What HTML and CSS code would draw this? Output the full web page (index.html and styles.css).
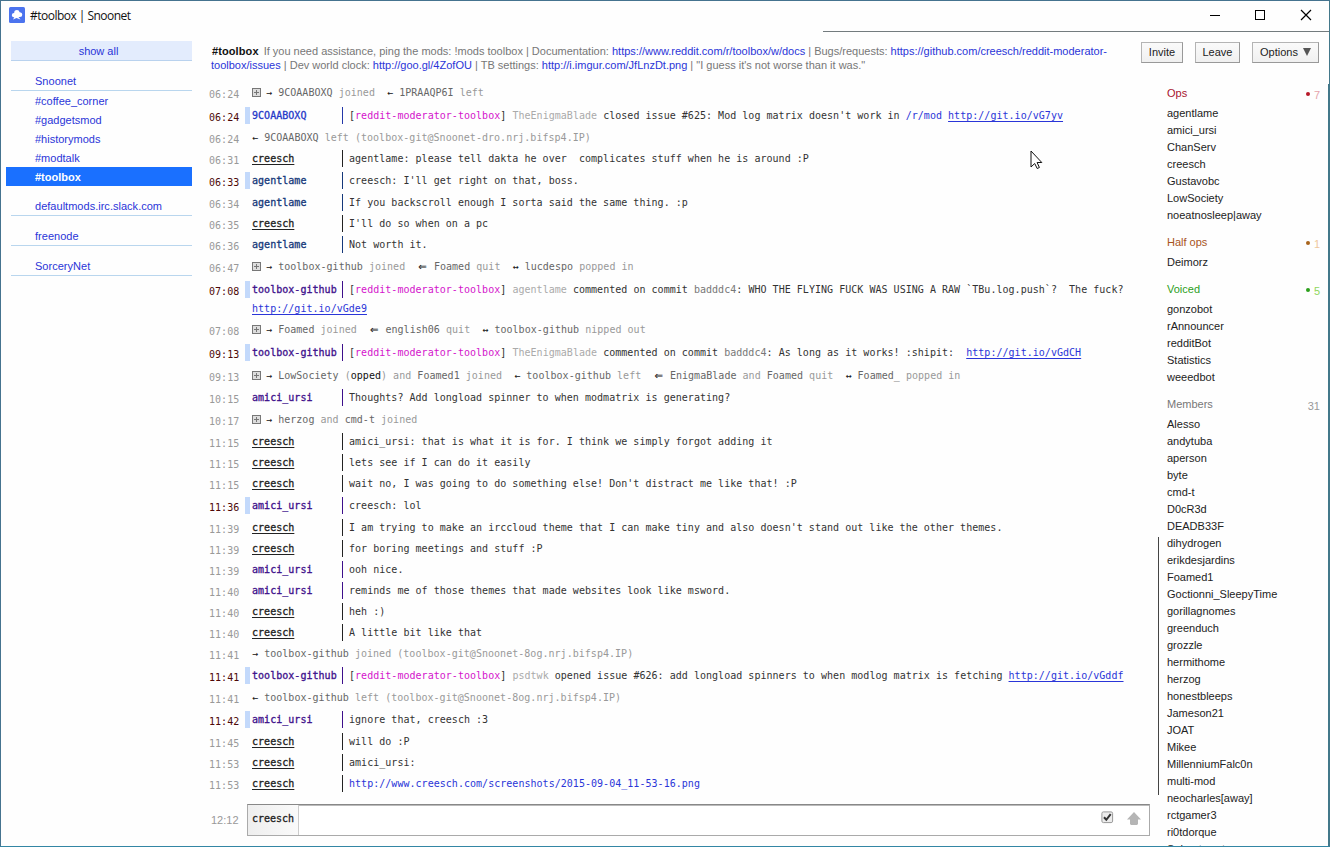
FILE: index.html
```html
<!DOCTYPE html>
<html lang="en">
<head>
<meta charset="utf-8">
<title>#toolbox | Snoonet</title>
<link rel="stylesheet" href="styles.css">
</head>
<body>
<div class="window">
  <header class="titlebar">
    <svg class="logo" width="16" height="16" viewBox="0 0 16 16"><rect width="16" height="16" rx="1.5" fill="#4b73ee"/><path d="M8 3a2.700 2.700 0 0 1 2.600 2.200A2.500 2.500 0 0 1 13.300 7.700a2.300 2.300 0 0 1-2.300 2.200H9.500L11.500 12.600 7.500 11 4 12.400 5.300 10.200A2.200 2.200 0 0 1 2.800 8.200 2.300 2.300 0 0 1 5.200 6 2.800 2.800 0 0 1 8 3z" fill="#fff"/></svg>
    <span class="title">#toolbox | Snoonet</span>
    <svg class="controls" width="103" height="12" viewBox="0 0 103 12" fill="none" stroke="#000" shape-rendering="crispEdges"><path d="M0 6.500h10M45.500 1.500h9v9h-9z"/><path d="M91 1l10 10M101 1L91 11" shape-rendering="auto" stroke-width="1.200"/></svg>
  </header>
  <div class="progress"></div>
  <div class="body">
    <nav class="sidebar">
      <a class="show-all">show all</a>
      <a class="network first">Snoonet</a>
      <a class="channel">#coffee_corner</a>
      <a class="channel">#gadgetsmod</a>
      <a class="channel">#historymods</a>
      <a class="channel">#modtalk</a>
      <a class="channel active">#toolbox</a>
      <a class="network">defaultmods.irc.slack.com</a>
      <a class="network">freenode</a>
      <a class="network">SorceryNet</a>
    </nav>
    <div class="content">
      <div class="top">
        <div class="topic">
          <div class="t1"><b>#toolbox</b>If you need assistance, ping the mods: !mods toolbox | Documentation: <a>https://www.reddit.com/r/toolbox/w/docs</a> | Bugs/requests: <a>https://github.com/creesch/reddit-moderator-</a></div>
          <div class="t2"><a>toolbox/issues</a> | Dev world clock: <a>http://goo.gl/4ZofOU</a> | TB settings: <a>http://i.imgur.com/JfLnzDt.png</a> | "I guess it's not worse than it was."</div>
        </div>
        <div class="buttons"><span class="btn invite">Invite</span><span class="btn leave">Leave</span><span class="btn options">Options <i></i></span></div>
      </div>
      <div class="columns">
        <div class="chat">
          <div class="log">
            <div class="row sys h23"><time>06:24</time><div class="ev"><i class="plus"></i><u>→</u> <b>9COAABOXQ</b> joined  <u>←</u> <b>1PRAAQP6I</b> left</div></div>
            <div class="row hl h22 blue"><time>06:24</time><span class="nick">9COAABOXQ</span><p>[<em>reddit-moderator-toolbox</em>] <s>TheEnigmaBlade</s> closed issue #625: Mod log matrix doesn't work in <a>/r/mod</a> <a class="ul">http://git.io/vG7yv</a></p></div>
            <div class="row sys"><time>06:24</time><div class="ev"><u>←</u> <b>9COAABOXQ</b> left (toolbox-git@Snoonet-dro.nrj.bifsp4.IP)</div></div>
            <div class="row me h22"><time>06:31</time><span class="nick">creesch</span><p>agentlame: please tell dakta he over  complicates stuff when he is around :P</p></div>
            <div class="row hl h22 navy"><time>06:33</time><span class="nick">agentlame</span><p>creesch: I'll get right on that, boss.</p></div>
            <div class="row navy"><time>06:34</time><span class="nick">agentlame</span><p>If you backscroll enough I sorta said the same thing. :p</p></div>
            <div class="row me"><time>06:35</time><span class="nick">creesch</span><p>I'll do so when on a pc</p></div>
            <div class="row navy h22"><time>06:36</time><span class="nick">agentlame</span><p>Not worth it.</p></div>
            <div class="row sys h23"><time>06:47</time><div class="ev"><i class="plus"></i><u>→</u> <b>toolbox-github</b> joined  <u class="q">⇐</u> <b>Foamed</b> quit  <u>↔</u> <b>lucdespo</b> popped in</div></div>
            <div class="row hl h40 purple"><time>07:08</time><span class="nick">toolbox-github</span><p>[<em>reddit-moderator-toolbox</em>] <s>agentlame</s> commented on commit <q>badddc4</q>: WHO THE FLYING FUCK WAS USING A RAW `TBu.log.push`?  The fuck?</p><a class="ul wrap">http://git.io/vGde9</a></div>
            <div class="row sys h23"><time>07:08</time><div class="ev"><i class="plus"></i><u>→</u> <b>Foamed</b> joined  <u class="q">⇐</u> <b>english06</b> quit  <u>↔</u> <b>toolbox-github</b> nipped out</div></div>
            <div class="row hl h23 purple"><time>09:13</time><span class="nick">toolbox-github</span><p>[<em>reddit-moderator-toolbox</em>] <s>TheEnigmaBlade</s> commented on commit <q>badddc4</q>: As long as it works! :shipit:  <a class="ul">http://git.io/vGdCH</a></p></div>
            <div class="row sys h22"><time>09:13</time><div class="ev"><i class="plus"></i><u>→</u> <b>LowSociety</b> (<u>opped</u>) and <b>Foamed1</b> joined  <u>←</u> <b>toolbox-github</b> left  <u class="q">⇐</u> <b>EnigmaBlade</b> and <b>Foamed</b> quit  <u>↔</u> <b>Foamed_</b> popped in</div></div>
            <div class="row purple h22"><time>10:15</time><span class="nick">amici_ursi</span><p>Thoughts? Add longload spinner to when modmatrix is generating?</p></div>
            <div class="row sys h22"><time>10:17</time><div class="ev"><i class="plus"></i><u>→</u> <b>herzog</b> and <b>cmd-t</b> joined</div></div>
            <div class="row me"><time>11:15</time><span class="nick">creesch</span><p>amici_ursi: that is what it is for. I think we simply forgot adding it</p></div>
            <div class="row me"><time>11:15</time><span class="nick">creesch</span><p>lets see if I can do it easily</p></div>
            <div class="row me h22"><time>11:15</time><span class="nick">creesch</span><p>wait no, I was going to do something else! Don't distract me like that! :P</p></div>
            <div class="row hl h22 purple"><time>11:36</time><span class="nick">amici_ursi</span><p>creesch: lol</p></div>
            <div class="row me"><time>11:39</time><span class="nick">creesch</span><p>I am trying to make an irccloud theme that I can make tiny and also doesn't stand out like the other themes.</p></div>
            <div class="row me"><time>11:39</time><span class="nick">creesch</span><p>for boring meetings and stuff :P</p></div>
            <div class="row purple"><time>11:39</time><span class="nick">amici_ursi</span><p>ooh nice.</p></div>
            <div class="row purple"><time>11:40</time><span class="nick">amici_ursi</span><p>reminds me of those themes that made websites look like msword.</p></div>
            <div class="row me"><time>11:40</time><span class="nick">creesch</span><p>heh :)</p></div>
            <div class="row me"><time>11:40</time><span class="nick">creesch</span><p>A little bit like that</p></div>
            <div class="row sys h22"><time>11:41</time><div class="ev"><u>→</u> <b>toolbox-github</b> joined (toolbox-git@Snoonet-8og.nrj.bifsp4.IP)</div></div>
            <div class="row hl h22 purple"><time>11:41</time><span class="nick">toolbox-github</span><p>[<em>reddit-moderator-toolbox</em>] <s>psdtwk</s> opened issue #626: add longload spinners to when modlog matrix is fetching <a class="ul">http://git.io/vGddf</a></p></div>
            <div class="row sys h22"><time>11:41</time><div class="ev"><u>←</u> <b>toolbox-github</b> left (toolbox-git@Snoonet-8og.nrj.bifsp4.IP)</div></div>
            <div class="row hl h22 purple"><time>11:42</time><span class="nick">amici_ursi</span><p>ignore that, creesch :3</p></div>
            <div class="row me"><time>11:45</time><span class="nick">creesch</span><p>will do :P</p></div>
            <div class="row me"><time>11:53</time><span class="nick">creesch</span><p>amici_ursi:</p></div>
            <div class="row me"><time>11:53</time><span class="nick">creesch</span><p><a>http://www.creesch.com/screenshots/2015-09-04_11-53-16.png</a></p></div>
          </div>
          <div class="compose">
            <span class="clock">12:12</span>
            <div class="input"><span class="who">creesch</span>
              <svg class="check" width="13" height="13" viewBox="0 0 13 13"><rect x=".9" y=".9" width="10.700" height="10.700" rx="1.500" fill="#ececec" stroke="#999"/><path d="M3 6.300l2.300 2.500L9.700 3.200" fill="none" stroke="#333" stroke-width="2"/></svg>
              <svg class="up" width="14" height="13" viewBox="0 0 14 13"><path d="M7 0l7 7.500h-3V12l-1 1H4l-1-1V7.500H0z" fill="#b5b5b5"/></svg>
            </div>
          </div>
        </div>
        <div class="rail"></div>
        <aside class="members">
          <h4 class="ops">Ops<span><i></i>7</span></h4>
          <ul><li>agentlame</li><li>amici_ursi</li><li>ChanServ</li><li>creesch</li><li>Gustavobc</li><li>LowSociety</li><li>noeatnosleep|away</li></ul>
          <h4 class="half">Half ops<span><i></i>1</span></h4>
          <ul><li>Deimorz</li></ul>
          <h4 class="voiced">Voiced<span><i></i>5</span></h4>
          <ul><li>gonzobot</li><li>rAnnouncer</li><li>redditBot</li><li>Statistics</li><li>weeedbot</li></ul>
          <h4 class="all">Members<span>31</span></h4>
          <ul><li>Alesso</li><li>andytuba</li><li>aperson</li><li>byte</li><li>cmd-t</li><li>D0cR3d</li><li>DEADB33F</li><li>dihydrogen</li><li>erikdesjardins</li><li>Foamed1</li><li>Goctionni_SleepyTime</li><li>gorillagnomes</li><li>greenduch</li><li>grozzle</li><li>hermithome</li><li>herzog</li><li>honestbleeps</li><li>Jameson21</li><li>JOAT</li><li>Mikee</li><li>MillenniumFalc0n</li><li>multi-mod</li><li>neocharles[away]</li><li>rctgamer3</li><li>ri0tdorque</li><li>Sabnetweet</li></ul>
        </aside>
      </div>
    </div>
  </div>
  <svg class="cursor" width="13" height="20" viewBox="0 0 13 20"><path d="M1 1v16l3.700-3.500 2.500 5 2.200-1-2.300-5h4.700z" fill="#fff" stroke="#111"/></svg>
</div>
</body>
</html>
```

FILE: styles.css
```css
* { box-sizing: border-box; }
body { margin: 0; background: #fefefe; font: 11px/17px "Liberation Sans", Arial, sans-serif; color: #222; }
p, ul, h4 { margin: 0; padding: 0; list-style: none; font-weight: normal; font-size: inherit; }
u, s, em, b, i, q { text-decoration: none; font-style: normal; font-weight: normal; }
q::before, q::after { content: none; }
a { color: #2a35d8; }
.window { position: relative; width: 1330px; height: 847px; border: 1px solid #45738f; border-bottom-color: #3386a4; border-right-color: #43788a; overflow: hidden; display: flex; flex-direction: column; }
.titlebar { flex: none; height: 30px; display: flex; align-items: center; padding: 0 16px 2px 8px; }
.title { margin: 1px 0 0 5px; flex: 1; font: 12px/16px "Open Sans", sans-serif; letter-spacing: -.52px; color: #111; }
.progress { flex: none; align-self: flex-end; width: 506px; height: 1px; background: #737b7e; }
.body { flex: 1; display: flex; min-height: 0; }

.sidebar { width: 191px; padding: 9px 0 0 10px; display: flex; flex-direction: column; }
.show-all { height: 20px; line-height: 20px; text-align: center; background: #e3ecfd; border-bottom: 1px solid #b9d2ee; padding-right: 6px; }
.network { height: 20px; margin-top: 10px; padding-left: 24px; line-height: 20px; border-bottom: 1px solid #b9d6ee; letter-spacing: .02px; }
.channel { height: 19px; line-height: 21px; padding-left: 24px; }
.channel.active { background: #1a70ff; color: #fff; font-weight: bold; margin-left: -5px; padding-left: 29px; }

.content { flex: 1; display: flex; flex-direction: column; min-width: 0; min-height: 0; padding-left: 17px; }
.top { flex: none; height: 52px; display: flex; }
.topic { width: 932px; padding-top: 12px; line-height: 14px; color: #777; }
.t1, .t2 { white-space: pre; }
.t1 { padding-left: 3px; }
.t2 { padding-left: 2px; }
.topic b { color: #111; font-weight: bold; margin-right: 5px; letter-spacing: .1px; }
.buttons { display: flex; padding-top: 10px; height: 31px; }
.btn { height: 21px; line-height: 19px; text-align: center; border: 1px solid #b4b4b4; border-right-color: #999; border-bottom-color: #999; background: linear-gradient(#fafafa, #f0f0f0); color: #222; }
.invite { width: 42px; }
.leave { width: 45px; margin-left: 12px; }
.options { width: 67px; margin-left: 12px; }
.btn i { display: inline-block; border: 4px solid transparent; border-top: 8px solid #555; border-bottom: 0; margin-left: 2px; }

.columns { flex: 1; display: flex; min-height: 0; }
.chat { width: 941px; display: flex; flex-direction: column; }
.log { height: 720px; font: 10px/17px "DejaVu Sans Mono", monospace; letter-spacing: .03px; }
.row { height: 21px; display: flex; align-items: flex-start; flex-wrap: wrap; align-content: flex-start; color: #333; }
.h22 { height: 22px; }
.h23 { height: 23px; }
.h40 { height: 40px; }
time { width: 36px; height: 17px; padding-top: 2px; color: #999; }
.nick { width: 98px; height: 17px; border-left: 0 solid #c3d9fb; border-right: 1px solid #222; padding-left: 7px; color: #222; -webkit-text-stroke: .3px currentColor; }
.hl time { color: #4d0808; }
.hl .nick { border-left-width: 5px; padding-left: 2px; }
.me .nick { text-decoration: underline; text-underline-offset: 2px; }
.blue .nick { color: #2437c8; border-right-color: #2437a8; }
.navy .nick { color: #15387a; border-right-color: #15387a; }
.purple .nick { color: #3d0f8b; border-right-color: #3d0f8b; }
.row p { padding-left: 6px; height: 17px; white-space: pre; }
.row em { color: #d414cc; }
.row s { color: #aaa; }
.row q { color: #777; }
.ul { text-decoration: underline; text-underline-offset: 2px; }
.wrap { margin: 2px 0 0 43px; height: 17px; }
.ev { padding-left: 7px; color: #999; white-space: pre; }
.ev b { color: #666; }
.ev u { color: #111; }
.ev .q { display: inline-block; width: 10.500px; height: 17px; vertical-align: top; text-align: center; font-size: 14px; }
.plus { display: inline-block; width: 9px; height: 9px; margin-right: 5px; vertical-align: -1px; border: 1px solid #777; background: linear-gradient(#777, #777) center / 5px 1px no-repeat, linear-gradient(#777, #777) center / 1px 5px no-repeat, #ddd; }
.compose { display: flex; }
.clock { width: 38px; padding: 8px 0 0 2px; color: #999; }
.input { flex: 1; height: 32px; display: flex; align-items: center; border: 1px solid #aaa; border-top: 1px solid #888; box-shadow: inset 0 1px #bbb; background: #fff; }
.who { width: 51px; height: 30px; padding: 5px 0 0 4px; border-right: 1px solid #ccc; background: linear-gradient(90deg, #eee, #fafafa); font: 10px/17px "DejaVu Sans Mono", monospace; -webkit-text-stroke: .3px currentColor; }
.check { margin: 0 13px 5px auto; }
.up { margin: 0 8px 3px 0; }
.rail { width: 1px; height: 258px; margin: 453px 0 0 8px; background: #444; }
.members { flex: 1; padding: 1px 8px 0 8px; border-right: 1px solid #43788a; overflow: hidden; }
.members h4 { height: 20px; display: flex; justify-content: space-between; }
.members ul + h4 { margin-top: 10px; }
.members span { padding-top: 2px; }
.members i { display: inline-block; width: 4px; height: 4px; margin: 0 4px 3px 0; vertical-align: 2px; border-radius: 50%; background: currentColor; vertical-align: baseline; }
.ops { color: #a8142e; } .ops span { color: #e5a3ac; } .ops i { color: #b81828; }
.half { color: #a8541c; } .half span { color: #efc79c; } .half i { color: #a8641c; }
.voiced { color: #2ca01c; } .voiced span { color: #8fd75c; } .voiced i { color: #2ca01c; }
.all { color: #777; } .all span { color: #999; }
.cursor { position: absolute; left: 1029px; top: 149px; }
```
